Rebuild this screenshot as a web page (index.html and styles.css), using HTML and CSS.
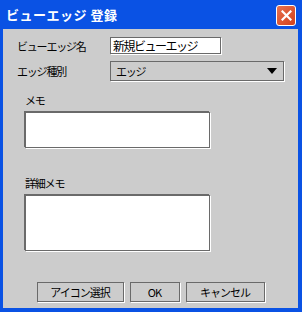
FILE: index.html
```html
<!DOCTYPE html>
<html lang="ja">
<head>
    <meta charset="UTF-8">
    <title>ビューエッジ 登録</title>
    <link rel="stylesheet" href="styles.css">
</head>
<body>
    <div class="window">
        <div class="titlebar">
            <span class="title">ビューエッジ 登録</span>
            <button class="close" type="button" aria-label="閉じる">
                <svg width="11" height="11" viewBox="0 0 11 11"><path d="M1.5 1.5 L9.5 9.5 M9.5 1.5 L1.5 9.5" stroke="#fff" stroke-width="2.2" stroke-linecap="square"/></svg>
            </button>
        </div>
        <div class="content">
            <div class="fields">
                <label for="edgeName">ビューエッジ名</label>
                <input id="edgeName" class="text-input" type="text" value="新規ビューエッジ">
                <label for="edgeType">エッジ種別</label>
                <div id="edgeType" class="select">
                    <span>エッジ</span>
                    <span class="arrow"></span>
                </div>
            </div>

            <div class="memo">
                <label for="memo">メモ</label>
                <textarea id="memo" class="memo-box short"></textarea>
                <label for="detail" class="detail-label">詳細メモ</label>
                <textarea id="detail" class="memo-box tall"></textarea>
            </div>

            <div class="buttons">
                <button type="button" class="btn icon-btn">アイコン選択</button>
                <button type="button" class="btn ok-btn">OK</button>
                <button type="button" class="btn cancel-btn">キャンセル</button>
            </div>
        </div>
    </div>
</body>
</html>
```

FILE: styles.css
```css
body {
    margin: 0;
    font-family: "Noto Sans CJK JP", "DejaVu Sans", sans-serif;
    font-size: 11px;
    color: #000;
}
.window {
    width: 302px;
    height: 312px;
    background-color: #0a52e4;
    box-sizing: border-box;
    padding: 0 4px 4px 3px;
    display: flex;
    flex-direction: column;
}
.titlebar {
    height: 29px;
    display: flex;
    align-items: center;
    justify-content: space-between;
}
.title {
    color: #fff;
    font-weight: bold;
    font-size: 13px;
    padding-left: 3px;
    letter-spacing: 0.5px;
}
.close {
    width: 20px;
    height: 21px;
    margin: 1px 2px 0 0;
    padding: 0;
    border: 1px solid #fff;
    border-radius: 3px;
    background: linear-gradient(135deg, #e8724f, #d2401c);
    display: flex;
    align-items: center;
    justify-content: center;
}
.content {
    flex: 1;
    background-color: #cccccc;
    display: flex;
    flex-direction: column;
    letter-spacing: -1.2px;
    line-height: 14px;
}
.fields {
    display: grid;
    grid-template-columns: 93px auto;
    align-items: center;
    row-gap: 7px;
    padding: 8px 0 0 14px;
}
.text-input {
    width: 111px;
    height: 17px;
    box-sizing: border-box;
    margin: 0;
    padding: 0 0 0 2px;
    border: 1px solid #6a6a6a;
    box-shadow: 1px 1px 0 #fff;
    background: #fff;
    font-family: inherit;
    font-size: 12px;
    letter-spacing: -1.5px;
    outline: none;
}
.select {
    width: 174px;
    height: 20px;
    box-sizing: border-box;
    border: 1px solid #6a6a6a;
    box-shadow: 1px 1px 0 #fff;
    display: flex;
    align-items: center;
    justify-content: space-between;
    padding: 0 6px 0 5px;
}
.arrow {
    width: 0;
    height: 0;
    border-left: 5px solid transparent;
    border-right: 5px solid transparent;
    border-top: 6px solid #000;
}
.memo {
    display: flex;
    flex-direction: column;
    align-items: flex-start;
    padding: 12px 0 0 22px;
}
.memo label {
    display: block;
}
.memo-box {
    width: 185px;
    box-sizing: border-box;
    margin: 5px 0 0;
    border: 1px solid #6a6a6a;
    box-shadow: -1px -1px 0 #6a6a6a, 1px 1px 0 #fff;
    background: #fff;
    resize: none;
    outline: none;
}
.short {
    height: 36px;
}
.tall {
    height: 56px;
}
.detail-label {
    margin-top: 28px;
}
.buttons {
    display: flex;
    justify-content: center;
    gap: 6px;
    margin-top: auto;
    margin-bottom: 6px;
}
.btn {
    height: 20px;
    box-sizing: border-box;
    padding: 0;
    border: 1px solid #6a6a6a;
    box-shadow: 1px 1px 0 #fff;
    background-color: #cccccc;
    font-family: inherit;
    font-size: 11px;
    letter-spacing: -1px;
    color: #000;
}
.icon-btn {
    width: 87px;
}
.ok-btn {
    width: 50px;
}
.cancel-btn {
    width: 79px;
}
```
